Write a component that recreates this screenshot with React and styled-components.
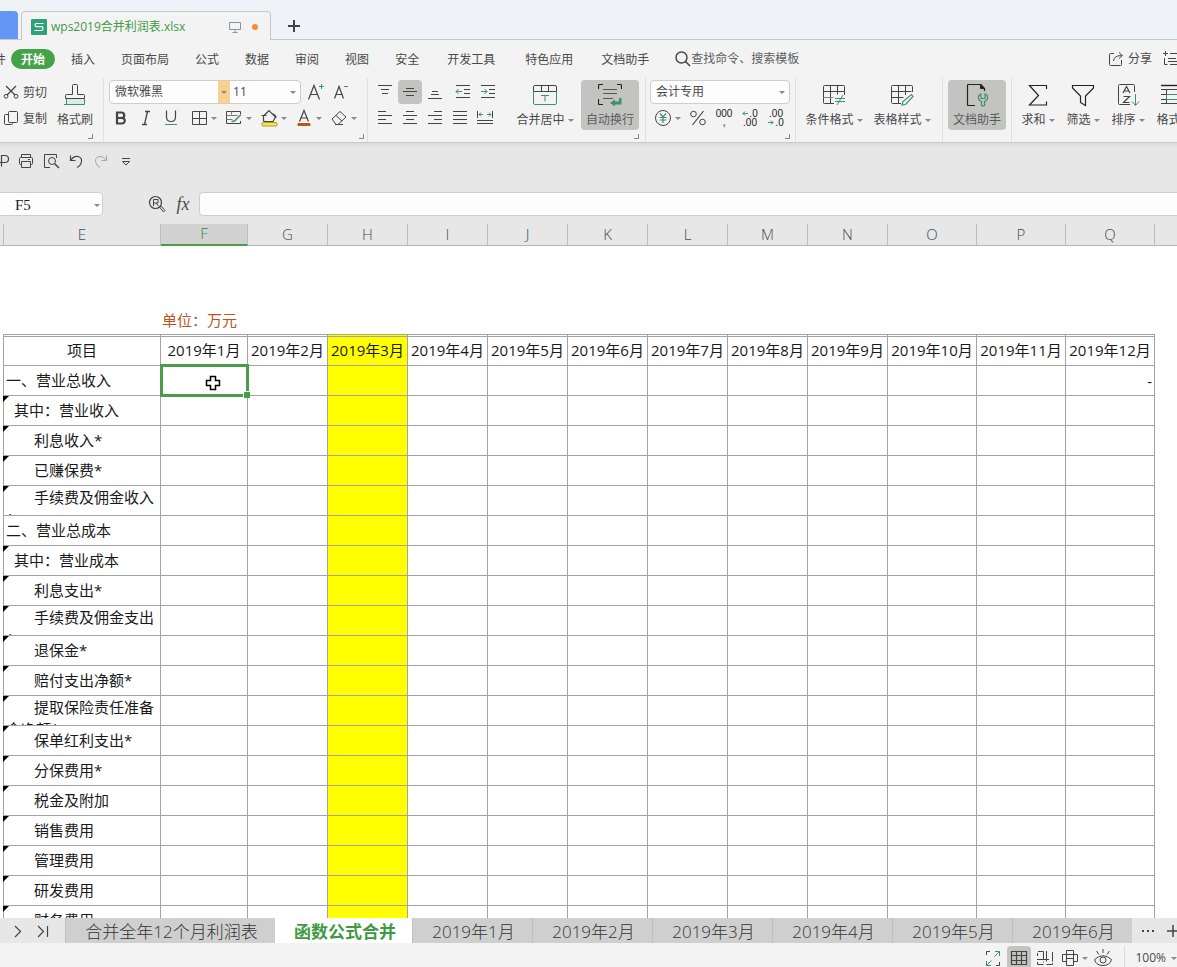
import styled, { createGlobalStyle, css } from "styled-components";

const menus = [
	{ name: "插入" },
	{ name: "页面布局" },
	{ name: "公式" },
	{ name: "数据" },
	{ name: "审阅" },
	{ name: "视图" },
	{ name: "安全" },
	{ name: "开发工具", wide: true },
	{ name: "特色应用", wide: true },
	{ name: "文档助手" },
];

const columns = [
	{ letter: "E", width: 157, title: "项目" },
	{ letter: "F", width: 87, title: "2019年1月" },
	{ letter: "G", width: 80, title: "2019年2月" },
	{ letter: "H", width: 80, title: "2019年3月" },
	{ letter: "I", width: 80, title: "2019年4月" },
	{ letter: "J", width: 80, title: "2019年5月" },
	{ letter: "K", width: 80, title: "2019年6月" },
	{ letter: "L", width: 80, title: "2019年7月" },
	{ letter: "M", width: 80, title: "2019年8月" },
	{ letter: "N", width: 80, title: "2019年9月" },
	{ letter: "O", width: 89, title: "2019年10月" },
	{ letter: "P", width: 89, title: "2019年11月" },
	{ letter: "Q", width: 89, title: "2019年12月" },
];

const rows = [
	{ label: "一、营业总收入", indent: 0, total: true },
	{ label: "其中：营业收入", indent: 8 },
	{ label: "利息收入*", indent: 28 },
	{ label: "已赚保费*", indent: 28 },
	{ label: "手续费及佣金收入*", indent: 28, wrap: true },
	{ label: "二、营业总成本", indent: 0 },
	{ label: "其中：营业成本", indent: 8 },
	{ label: "利息支出*", indent: 28 },
	{ label: "手续费及佣金支出*", indent: 28, wrap: true },
	{ label: "退保金*", indent: 28 },
	{ label: "赔付支出净额*", indent: 28 },
	{ label: "提取保险责任准备金净额*", indent: 28, wrap: true },
	{ label: "保单红利支出*", indent: 28 },
	{ label: "分保费用*", indent: 28 },
	{ label: "税金及附加", indent: 28 },
	{ label: "销售费用", indent: 28 },
	{ label: "管理费用", indent: 28 },
	{ label: "研发费用", indent: 28 },
	{ label: "财务费用", indent: 28 },
];

const sheets = [
	{ name: "合并全年12个月利润表", width: 210 },
	{ name: "函数公式合并", width: 137, active: true },
	{ name: "2019年1月", width: 120 },
	{ name: "2019年2月", width: 120 },
	{ name: "2019年3月", width: 120 },
	{ name: "2019年4月", width: 120 },
	{ name: "2019年5月", width: 120 },
	{ name: "2019年6月", width: 120 },
];

const green = "#3f8f72";

function Icon({ size = 18, children }) {
	return (
		<StyledSvg width={size} height={size} viewBox={`0 0 ${size} ${size}`} aria-hidden='true'>
			{children}
		</StyledSvg>
	);
}

function TitleBar() {
	return (
		<StyledTitleBar>
			<HomeTab aria-label='首页' />
			<FileTab>
				<svg width='16' height='16' viewBox='0 0 16 16' aria-hidden='true'>
					<rect width='16' height='16' rx='1' fill='#2fa27c' />
					<path d='M12.5 4.5H5.5Q4 4.5 4 6T5.5 7.7H10.5Q12 7.7 12 9.5T10.5 11.5H3.5' fill='none' stroke='#fff' strokeWidth='1.2' />
				</svg>
				<FileName>wps2019合并利润表.xlsx</FileName>
				<svg width='12' height='12' viewBox='0 0 12 12' fill='none' stroke='#8d9499' aria-hidden='true'>
					<path d='M.5 1.5h11v7H.5zM6 9v2M3.5 11.5h5' />
				</svg>
				<UnsavedDot />
			</FileTab>
			<NewTab aria-label='新建'>
				<Icon size={14}>
					<path d='M7 1v12M1 7h12' strokeWidth='2' />
				</Icon>
			</NewTab>
		</StyledTitleBar>
	);
}

function MenuBar() {
	return (
		<StyledMenuBar>
			<FileMenu>文件</FileMenu>
			<StartMenu>开始</StartMenu>
			{menus.map((menu) => (
				<MenuItem key={menu.name} $wide={menu.wide}>
					{menu.name}
				</MenuItem>
			))}
			<Search>
				<Icon size={16}>
					<circle cx='6.5' cy='6.5' r='5.5' strokeWidth='1.4' />
					<path d='M10.5 10.5L15 15' strokeWidth='1.6' />
				</Icon>
				<input aria-label='查找' placeholder='查找命令、搜索模板' />
			</Search>
			<ShareButton>
				<Icon size={16}>
					<path d='M6 2.5H2.5Q1.5 2.5 1.5 3.5v10q0 1 1 1h10q1 0 1-1V9M5.5 10Q6 4.5 13.5 4.5M11 1.5l3.5 3L11 7.5' />
				</Icon>
				分享
			</ShareButton>
			<NoteButton aria-label='批注'>
				<Icon>
					<path d='M3.5 1v5M1 3.5h5M8 3.5h9M2.5 8v6.5h3M6 8.5h8M6 11.5h11M8 14.5h9' />
				</Icon>
			</NoteButton>
		</StyledMenuBar>
	);
}

function BigButton({ label, icon, caret, active, narrow }) {
	return (
		<StyledBigButton $active={active} $narrow={narrow}>
			<Icon size={24}>{icon}</Icon>
			<span>
				{label}
				{caret && <Caret />}
			</span>
		</StyledBigButton>
	);
}

function DigitArrow({ d }) {
	return (
		<svg width='7' height='7' viewBox='0 0 7 7' fill='none' stroke={green} aria-hidden='true'>
			<path d={d} />
		</svg>
	);
}

function Ribbon() {
	return (
		<StyledRibbon>
			<Group $left={3} $right={10}>
				<GroupBody>
					<Lines>
						<TextButton>
							<Icon size={16}>
								<path d='M3 2l9 9M13 2L4 11' strokeWidth='1.3' />
								<circle cx='3' cy='12.3' r='1.9' />
								<circle cx='13' cy='12.3' r='1.9' />
							</Icon>
							<span>剪切</span>
						</TextButton>
						<TextButton>
							<Icon size={16}>
								<rect x='5.5' y='1.5' width='9' height='11' rx='1' />
								<path d='M5.5 4.5h-3q-1 0-1 1v8q0 1 1 1h6q1 0 1-1v-1' />
							</Icon>
							<span>复制</span>
						</TextButton>
					</Lines>
					<BrushButton>
						<Icon size={24}>
							<path d='M4 16h17v5.5H4z' fill='#dcebe7' stroke='none' />
							<path d='M9.5 11.5V2.5q0-1 1-1h3q1 0 1 1v9h6q1 0 1 1v3h-19v-3q0-1 1-1z' />
							<path d='M3.5 16v5.5h18V16M1 21.5h20' stroke={green} />
						</Icon>
						<span>格式刷</span>
					</BrushButton>
				</GroupBody>
				<Launcher aria-label='剪贴板设置' />
			</Group>

			<Group $left={5} $right={3}>
				<GroupBody>
					<Lines>
						<Line>
							<FontBox>
								<SelectBox $size={108}>
									<select aria-label='字体' defaultValue='微软雅黑'>
										<option>微软雅黑</option>
									</select>
								</SelectBox>
								<FontArrow>
									<Caret />
								</FontArrow>
								<SelectBox $size={70} $left={3}>
									<select aria-label='字号' defaultValue='11'>
										<option>11</option>
									</select>
									<Caret />
								</SelectBox>
							</FontBox>
							<ToolButton aria-label='增大字号' $gap={2}>
								<Icon>
									<path d='M1.5 16.5L7 2.5l5.5 14M3.5 11.5h7' strokeWidth='1.2' />
									<path d='M14.5 1v5M12 3.5h5' stroke={green} />
								</Icon>
							</ToolButton>
							<ToolButton aria-label='减小字号'>
								<Icon>
									<path d='M2.5 15.5L7 3.5l4.5 12M4 11.5h6' strokeWidth='1.2' />
									<path d='M12 3.5h4' stroke={green} />
								</Icon>
							</ToolButton>
						</Line>
						<Line>
							<ToolButton aria-label='加粗'>
								<Icon>
									<path d='M5 3.5h4.5a2.6 2.6 0 0 1 0 5.5H5zM5 9h5a2.7 2.7 0 0 1 0 5.5H5z' strokeWidth='2.2' />
								</Icon>
							</ToolButton>
							<ToolButton aria-label='倾斜'>
								<Icon>
									<path d='M8 2.5h5M5 15.5h5M10.5 2.5l-3 13' strokeWidth='1.3' />
								</Icon>
							</ToolButton>
							<ToolButton aria-label='下划线'>
								<Icon>
									<path d='M4.5 1.5v6.5q0 4.5 4.5 4.5t4.5-4.5V1.5' strokeWidth='1.2' />
									<path d='M3 15.5h12' stroke={green} />
								</Icon>
							</ToolButton>
							<SplitButton aria-label='边框' $gap={6}>
								<Icon>
									<path d='M2.5 2.5h14v13h-14zM9.5 2.5v13M2.5 9.5h14' />
								</Icon>
								<Caret />
							</SplitButton>
							<SplitButton aria-label='绘图边框'>
								<Icon>
									<path d='M15.5 5V2.5h-14v12h14V12' />
									<path d='M1.5 6.5h11M1.5 10.5h6M6.5 2.5v3' stroke='#777' />
									<path d='M16 5.5L9.5 12l-3 .5' stroke={green} strokeWidth='1.5' />
								</Icon>
								<Caret />
							</SplitButton>
							<SplitButton aria-label='填充颜色'>
								<Icon>
									<path d='M1.5 6.5h5M3.5 7v5q2 1 5 .5h4.500L15.5 8 9 1.5 4 6.5M12 4.5q3 1 4.500 4' strokeWidth='1.2' />
									<rect x='2' y='13.5' width='15' height='3.5' rx='1' fill='#ffe640' stroke='#a59a4a' />
								</Icon>
								<Caret />
							</SplitButton>
							<SplitButton aria-label='字体颜色'>
								<Icon>
									<path d='M4.5 12.5L9 1.5l4.500 11M6 9h6' strokeWidth='1.2' />
									<rect x='2.5' y='14' width='13' height='3' rx='1' fill='#b8561e' stroke='none' />
								</Icon>
								<Caret />
							</SplitButton>
							<SplitButton aria-label='清除'>
								<Icon>
									<path d='M2 10l8-7.500 6 5.500-8 7.500H6zM6 6.500l6 5.500M5 15.500h8' />
								</Icon>
								<Caret />
							</SplitButton>
						</Line>
					</Lines>
				</GroupBody>
				<Launcher aria-label='字体设置' />
			</Group>

			<Group $left={5} $right={6}>
				<GroupBody>
					<Lines>
						<Line>
							<ToolButton aria-label='顶端对齐'>
								<Icon>
									<path d='M2 2.5h14M5 6.5h8M6 10.5h6' />
								</Icon>
							</ToolButton>
							<ToolButton aria-label='垂直居中' $active>
								<Icon>
									<path d='M5 5.5h8M2 8.5h14M5 12.5h8' />
								</Icon>
							</ToolButton>
							<ToolButton aria-label='底端对齐'>
								<Icon>
									<path d='M6 8.5h6M5 11.5h8M2 15.5h14' />
								</Icon>
							</ToolButton>
							<ToolButton aria-label='减少缩进' $gap={3}>
								<Icon>
									<path d='M2 2.5h14M10 6.5h6M10 10.5h6M2 14.5h14' />
									<path d='M2 8.5h6M4.5 6L2 8.5 4.5 11' stroke={green} />
								</Icon>
							</ToolButton>
							<ToolButton aria-label='增加缩进'>
								<Icon>
									<path d='M2 2.5h14M10 6.5h6M10 10.5h6M2 14.5h14' />
									<path d='M2 8.5h6M5.5 6L8 8.5 5.5 11' stroke={green} />
								</Icon>
							</ToolButton>
						</Line>
						<Line>
							<ToolButton aria-label='左对齐'>
								<Icon>
									<path d='M2 2.5h8M2 6.5h14M2 10.5h8M2 14.5h14' />
								</Icon>
							</ToolButton>
							<ToolButton aria-label='水平居中'>
								<Icon>
									<path d='M5 2.5h8M2 6.5h14M5 10.5h8M2 14.5h14' />
								</Icon>
							</ToolButton>
							<ToolButton aria-label='右对齐'>
								<Icon>
									<path d='M8 2.5h8M2 6.5h14M8 10.5h8M2 14.5h14' />
								</Icon>
							</ToolButton>
							<ToolButton aria-label='两端对齐'>
								<Icon>
									<path d='M2 2.5h14M2 6.5h14M2 10.5h14M2 14.5h14' />
								</Icon>
							</ToolButton>
							<ToolButton aria-label='分散对齐'>
								<Icon>
									<path d='M1.5 2v7M16.5 2v7M1 11.5h16M1 14.5h16' />
									<path d='M3 5.5h4M5 3.5l-2 2 2 2M11 5.5h4M13 3.5l2 2-2 2' stroke={green} />
								</Icon>
							</ToolButton>
						</Line>
					</Lines>
					<Spacer $size={12} />
					<BigButton
						label='合并居中'
						caret
						icon={
							<>
								<path d='M.5 8.5V4q0-1.500 1.500-1.500h20q1.500 0 1.500 1.500v4.500zM8.5 3v5M15.5 3v5' />
								<path d='M.5 9v11q0 1.500 1.500 1.500h20q1.500 0 1.500-1.500V9M8 12.500h8M12 12.500v6' stroke={green} />
							</>
						}
					/>
					<Spacer $size={3} />
					<BigButton
						label='自动换行'
						active
						icon={
							<>
								<path d='M.5 6V2.500q0-1 1-1H5M19 1.500h3.500q1 0 1 1V6M.5 16v4.500q0 1 1 1H5' stroke='#222' strokeWidth='1.2' />
								<path d='M5 6.500h14M5 10.500h14M5 15.500h10' stroke='#555' />
								<path d='M21 15h2.500v6.500H17V23.500l-5-3.500 5-3.500v2h4z' stroke='none' fill={green} />
							</>
						}
					/>
				</GroupBody>
				<Launcher aria-label='对齐设置' />
			</Group>

			<Group $left={4} $right={5}>
				<GroupBody>
					<Lines>
						<Line>
							<FormatBox>
								<SelectBox $size={138}>
									<select aria-label='数字格式' defaultValue='会计专用'>
										<option>会计专用</option>
									</select>
									<Caret />
								</SelectBox>
							</FormatBox>
						</Line>
						<NumberLine>
							<SplitButton aria-label='货币'>
								<Icon>
									<circle cx='9' cy='9' r='7.5' />
									<path d='M6 4.5L9 8l3-3.5M9 8v6M5.5 8.5h7M5.5 11h7' stroke={green} strokeWidth='1.2' />
								</Icon>
								<Caret />
							</SplitButton>
							<ToolButton aria-label='百分比'>
								<Icon>
									<circle cx='4.5' cy='5' r='2.8' />
									<circle cx='13.5' cy='13' r='2.8' />
									<path d='M14.5 2L3.5 16' strokeWidth='1.2' />
								</Icon>
							</ToolButton>
							<DigitButton>
								<span>000</span>
								<i>,</i>
							</DigitButton>
							<DigitButton>
								<span>
									<DigitArrow d='M1 3.5h5M3 1.5l-2 2 2 2' />
									.0
								</span>
								<span>.00</span>
							</DigitButton>
							<DigitButton>
								<span>.00</span>
								<span>
									<DigitArrow d='M0 3.5h5M3 1.5l2 2-2 2' />
									.0
								</span>
							</DigitButton>
						</NumberLine>
					</Lines>
				</GroupBody>
				<Launcher aria-label='数字设置' />
			</Group>

			<Group $left={5} $right={7}>
				<GroupBody $gap={2}>
					<BigButton
						label='条件格式'
						caret
						icon={
							<>
								<path d='M12 20.5H2.5q-1 0-1-1v-16q0-1 1-1h19q1 0 1 1V12M1.5 8.5h21M8.5 2.5v18M15.5 2.5v9' />
								<path d='M1.5 14.5h10' stroke='#888' />
								<path d='M13 15.5h10M13 18.5h10M21 12l-6 10' stroke={green} />
							</>
						}
					/>
					<BigButton
						label='表格样式'
						caret
						icon={
							<>
								<path d='M11 20.5H2.5q-1 0-1-1v-16q0-1 1-1h19q1 0 1 1V9M1.5 8.5h20M1.5 14.5h12M8.5 2.5v18M15.5 2.5V12' />
								<path d='M21.5 11.5l1.500 2-7.500 8-3.500.5 1-3.500z' stroke={green} strokeWidth='1.2' />
							</>
						}
					/>
				</GroupBody>
			</Group>

			<Group $left={5} $right={5}>
				<GroupBody>
					<BigButton
						label='文档助手'
						active
						icon={
							<>
								<path d='M10 22.5H3.5q-1 0-1-1v-19q0-1 1-1H16l3.500 4V8' stroke='#222' strokeWidth='1.2' />
								<path d='M15.5 1.5V5.5h4z' fill='#222' stroke='#222' />
								<path d='M16 11q-3 1-2.500 4t3 3.500v4q1.500 1 3 0v-4q2.500-.5 3-3.500T20 11v4.500h-4z' stroke={green} strokeWidth='1.2' />
							</>
						}
					/>
				</GroupBody>
			</Group>

			<Group $left={5} $right={0}>
				<GroupBody $gap={3}>
					<BigButton
						label='求和'
						caret
						narrow
						icon={<path d='M20.5 6V2.5H3.5l9 10-9 9.5h17V18.5' stroke='#222' strokeWidth='1.2' />}
					/>
					<BigButton
						label='筛选'
						caret
						narrow
						icon={<path d='M1.5 2.5h21v2.5L14.5 13v9.5l-5-3V13L1.5 5z' stroke='#222' strokeWidth='1.2' />}
					/>
					<BigButton
						label='排序'
						caret
						narrow
						icon={
							<>
								<path d='M14 21.5H3.5q-1 0-1-1v-18q0-1 1-1h14q1 0 1 1V9' />
								<path d='M7 10l3.5-6.5L14 10M8.5 8h4M7.500 13.500h6l-6 6h6' strokeWidth='1.2' />
								<path d='M19.5 11v11M16 18.5l3.5 4 3.5-4' stroke={green} />
							</>
						}
					/>
					<BigButton
						label='格式'
						caret
						narrow
						icon={
							<>
								<path d='M-2 2.5h26' stroke='#222' strokeWidth='1.4' />
								<path d='M-.5 6.5h24v14H-.5zM0 11.5h23M0 16.5h23M5.5 6.5v14M16.5 6.5v14' />
								<path d='M5.5 11.5h11v5h-11z' stroke={green} />
							</>
						}
					/>
				</GroupBody>
			</Group>
		</StyledRibbon>
	);
}

function QuickBar() {
	return (
		<StyledQuickBar>
			<ToolButton aria-label='输出为PDF'>
				<Icon>
					<path d='M9.5 14.5V3.5h3.5a3.5 3.5 0 0 1 0 7H4' strokeWidth='1.2' />
				</Icon>
			</ToolButton>
			<ToolButton aria-label='打印'>
				<Icon>
					<path d='M4.5 5.5v-3h9v3M4.5 12.5h-1q-1 0-1-1v-5q0-1 1-1h11q1 0 1 1v5q0 1-1 1h-1M4.5 9.5h9v6h-9zM11 7.5h2' />
				</Icon>
			</ToolButton>
			<ToolButton aria-label='打印预览'>
				<Icon>
					<path d='M8 15.5H2.5v-13h12V6' />
					<circle cx='10' cy='9' r='3.5' />
					<path d='M12.5 11.5L17 16' strokeWidth='1.5' />
				</Icon>
			</ToolButton>
			<ToolButton aria-label='撤销'>
				<Icon>
					<path d='M3.5 3.5v5h5M3.5 8.5Q7 3.5 11 4.5t3.5 5-4.5 6' strokeWidth='1.2' />
				</Icon>
			</ToolButton>
			<ToolButton aria-label='恢复' $faded>
				<Icon>
					<path d='M14.5 3.5v5h-5M14.5 8.5Q11 3.5 7 4.5t-3.5 5 4.5 6' />
				</Icon>
			</ToolButton>
			<ToolButton aria-label='自定义'>
				<Icon>
					<path d='M5 6.5h8M5.5 9.5h7L9 13z' />
				</Icon>
			</ToolButton>
		</StyledQuickBar>
	);
}

function FormulaBar() {
	return (
		<StyledFormulaBar>
			<NameBox>
				<input aria-label='名称框' defaultValue='F5' />
				<Caret />
			</NameBox>
			<ToolButton aria-label='浏览公式'>
				<Icon>
					<circle cx='7.5' cy='7.5' r='6' strokeWidth='1.2' />
					<path d='M5.5 11V4.5h4.5v3.5H5.5M8 8l2.5 3' />
					<path d='M11.5 12l1.500-1 4 4.500-1.500 1.500z' />
				</Icon>
			</ToolButton>
			<FxButton>fx</FxButton>
			<FormulaInput aria-label='编辑栏' />
		</StyledFormulaBar>
	);
}

function Sheet() {
	return (
		<StyledSheet>
			<table>
				<colgroup>
					<Col $width={4} />
					{columns.map((column) => (
						<Col key={column.letter} $width={column.width} />
					))}
					<col />
				</colgroup>
				<thead>
					<tr>
						<Letter />
						{columns.map((column) => (
							<Letter key={column.letter} scope='col' $active={column.letter === "F"}>
								{column.letter}
							</Letter>
						))}
						<Letter $last />
					</tr>
				</thead>
				<tbody>
					<BlankRow>
						<td colSpan={15} />
					</BlankRow>
					<UnitRow>
						<td colSpan={2} />
						<td colSpan={13}>单位：万元</td>
					</UnitRow>
					<tr>
						<Cell />
						{columns.map((column) => (
							<TitleCell key={column.letter} $yellow={column.letter === "H"}>
								{column.title}
							</TitleCell>
						))}
						<td />
					</tr>
					{rows.map((row) => (
						<tr key={row.label}>
							<Cell />
							<LabelCell $marked={row.indent > 0}>
								<Label $indent={row.indent} $wrap={row.wrap}>
									{row.label}
								</Label>
							</LabelCell>
							{columns.slice(1).map((column) => (
								<Cell key={column.letter} $yellow={column.letter === "H"}>
									{row.total && column.letter === "F" && (
										<Selection>
											<svg width='16' height='16' viewBox='0 0 16 16' aria-hidden='true'>
												<path d='M5.5 1.5h5v4h4v5h-4v4h-5v-4h-4v-5h4z' fill='#fff' stroke='#000' strokeWidth='1.5' />
											</svg>
										</Selection>
									)}
									{row.total && column.letter === "Q" && "-"}
								</Cell>
							))}
							<td />
						</tr>
					))}
				</tbody>
			</table>
		</StyledSheet>
	);
}

function SheetTabs() {
	return (
		<StyledSheetTabs>
			<TabArrows>
				<ToolButton aria-label='下一个'>
					<Icon>
						<path d='M6 4l5.5 5.5L6 15' strokeWidth='1.2' />
					</Icon>
				</ToolButton>
				<ToolButton aria-label='最后一个'>
					<Icon>
						<path d='M4 4l5.5 5.5L4 15M13.5 4v11' strokeWidth='1.2' />
					</Icon>
				</ToolButton>
			</TabArrows>
			{sheets.map((sheet) => (
				<SheetTab key={sheet.name} $width={sheet.width} $active={sheet.active}>
					{sheet.name}
				</SheetTab>
			))}
			<MoreTabs>
				<ToolButton aria-label='更多工作表'>
					<Icon>
						<path d='M3 9h2M8 9h2M13 9h2' strokeWidth='2' />
					</Icon>
				</ToolButton>
				<ToolButton aria-label='新建工作表'>
					<Icon>
						<path d='M9 3v12M3 9h12' strokeWidth='1.5' />
					</Icon>
				</ToolButton>
			</MoreTabs>
		</StyledSheetTabs>
	);
}

function StatusBar() {
	return (
		<StyledStatusBar>
			<ToolButton aria-label='全屏显示'>
				<Icon>
					<path d='M6 2.5H2.5V6M12 16.5h3.5V13' />
					<path d='M11 2.5h4.5V7M15.5 2.5l-5 5M2.5 12v4.5H7M2.5 16.5l5-5' stroke={green} />
				</Icon>
			</ToolButton>
			<ToolButton aria-label='普通视图' $active $gap={2}>
				<Icon>
					<path d='M1.5 2.5h15v13h-15zM1.5 6.5h15M1.5 11.5h15M6.5 2.5v13M11.5 2.5v13' strokeWidth='1.2' />
				</Icon>
			</ToolButton>
			<ToolButton aria-label='分页预览' $gap={2}>
				<Icon>
					<path d='M2 2.5h5.5v8M1.5 4v3M1 10.500h12M10.500 2v10.500M16.500 3v9.500M1.500 13v2.500h6M7.500 12.500v1M10.500 15.500h6v-1.500' />
				</Icon>
			</ToolButton>
			<ViewButton aria-label='页面布局' $gap={4}>
				<Icon>
					<path d='M5.500 12.500h-4v-7h15v7h-4M5.500 1.500h7v15h-7zM5.500 9.500h7' />
				</Icon>
				<Caret />
			</ViewButton>
			<ToolButton aria-label='护眼模式'>
				<Icon size={20}>
					<path d='M1.5 11.5Q10 4 18.5 11.5 17 17.5 10 17.5T1.5 11.5zM10 1v4M3.500 3l2.500 3.500M16.500 3L14 6.500' />
					<circle cx='10' cy='12' r='3' />
				</Icon>
			</ToolButton>
			<Zoom>
				100%
				<Caret />
			</Zoom>
		</StyledStatusBar>
	);
}

export default function App() {
	return (
		<>
			<GlobalStyle />
			<Page>
				<TitleBar />
				<MenuBar />
				<Ribbon />
				<QuickBar />
				<FormulaBar />
				<Sheet />
				<SheetTabs />
				<StatusBar />
			</Page>
		</>
	);
}

const GlobalStyle = createGlobalStyle`
	* {
		box-sizing: border-box;
	}

	body {
		margin: 0;
		background: #e7e7e7;
		color: #4a4a4a;
		font: 12px/18px "Open Sans", "Noto Sans CJK SC", sans-serif;
	}

	button {
		display: flex;
		align-items: center;
		flex-shrink: 0;
		padding: 0;
		border: none;
		background: none;
		color: inherit;
		font: inherit;
		white-space: nowrap;
	}

	input,
	select {
		min-width: 0;
		padding: 0;
		border: none;
		outline: none;
		background: none;
		color: inherit;
		font: inherit;
		appearance: none;
	}
`;

const Page = styled.div`
	height: 100vh;
	display: flex;
	flex-direction: column;
	overflow: hidden;
`;

const StyledSvg = styled.svg`
	flex-shrink: 0;
	fill: none;
	stroke: #444;
`;

const Caret = styled.i`
	display: inline-block;
	flex-shrink: 0;
	margin: 0 0 0 3px;
	border: 3px solid transparent;
	border-top-color: #888;
	border-bottom: none;
	vertical-align: middle;
`;

const Spacer = styled.div`
	flex: 0 0 ${({ $size }) => $size}px;
`;

const StyledTitleBar = styled.div`
	height: 40px;
	flex-shrink: 0;
	display: flex;
	align-items: flex-end;
	background: #eff2f7;
	box-shadow: inset 0 -1px #c4cacb;
`;

const HomeTab = styled.button`
	width: 18px;
	height: 28px;
	margin-bottom: 1px;
	background: #6397f5;
	border-radius: 0 4px 0 0;
`;

const FileTab = styled.div`
	width: 250px;
	height: 29px;
	margin-left: 3px;
	padding: 2px 12px 0 9px;
	display: flex;
	align-items: center;
	background: #f3f3f3;
	border: 1px solid #c4cacb;
	border-bottom: none;
	border-radius: 4px 4px 0 0;
`;

const FileName = styled.span`
	flex: 1;
	margin-left: 4px;
	color: #3f9a42;
`;

const UnsavedDot = styled.span`
	width: 6px;
	height: 6px;
	margin-left: 11px;
	background: #f5893c;
	border-radius: 50%;
`;

const NewTab = styled.button`
	height: 28px;
	margin-left: 16px;
`;

const StyledMenuBar = styled.nav`
	height: 38px;
	flex-shrink: 0;
	display: flex;
	align-items: center;
	background: #f3f3f3;
`;

const FileMenu = styled.button`
	margin-left: -18px;
	padding-top: 2px;
`;

const StartMenu = styled.button`
	height: 20px;
	margin: 0 3px 0 5px;
	padding: 2px 10px 0;
	background: #45a249;
	border-radius: 10px;
	color: #fff;
	font-weight: 700;
`;

const MenuItem = styled.button`
	padding: 2px ${({ $wide }) => ($wide ? 15 : 13)}px 0;
`;

const Search = styled.label`
	flex: 1;
	min-width: 140px;
	margin-left: 13px;
	display: flex;
	align-items: center;

	& input {
		flex: 1;
	}

	& input::placeholder {
		color: #5b625f;
		opacity: 1;
	}
`;

const ShareButton = styled.button`
	gap: 4px;
`;

const NoteButton = styled.button`
	margin: 0 -3px 0 10px;
`;

const StyledRibbon = styled.div`
	flex-shrink: 0;
	display: flex;
	overflow: hidden;
	background: #f3f3f3;
	border-bottom: 1px solid #cacaca;
`;

const Group = styled.div`
	flex-shrink: 0;
	height: 64px;
	padding: 2px ${({ $right }) => $right}px 0 ${({ $left }) => $left}px;
	border-right: 1px solid #e0e0e0;
`;

const GroupBody = styled.div`
	height: 50px;
	display: flex;
	gap: ${({ $gap = 0 }) => $gap}px;
`;

const Launcher = styled.button`
	width: 5px;
	height: 5px;
	margin: 4px 0 0 auto;
	border-right: 1px solid #888;
	border-bottom: 1px solid #888;
`;

const Lines = styled.div`
	display: flex;
	flex-direction: column;
	gap: 2px;
`;

const Line = styled.div`
	height: 24px;
	display: flex;
	align-items: center;
	gap: 1px;
`;

const NumberLine = styled(Line)`
	padding-left: 4px;
	gap: 2px;

	& > :first-child {
		width: 30px;
	}
`;

const TextButton = styled.button`
	height: 24px;
	gap: 4px;

	& span {
		padding-top: 2px;
	}
`;

const ToolButton = styled.button`
	width: 24px;
	height: 24px;
	justify-content: center;
	margin-left: ${({ $gap = 0 }) => $gap}px;
	background: ${({ $active }) => ($active ? "#c3c3c1" : "none")};
	border-radius: 4px;
	opacity: ${({ $faded }) => ($faded ? 0.4 : 1)};
`;

const SplitButton = styled.button`
	width: 34px;
	height: 24px;
	margin-left: ${({ $gap = 0 }) => $gap}px;
`;

const ViewButton = styled(SplitButton)`
	width: 30px;
`;

const DigitButton = styled.button`
	width: 24px;
	flex-direction: column;
	color: #222;
	font-family: "Liberation Sans", sans-serif;
	font-size: 10px;
	line-height: 9px;

	& i {
		color: ${green};
		font-style: normal;
		font-weight: 700;
	}
`;

const bigButton = css`
	height: 50px;
	padding-top: 3px;
	flex-direction: column;
	gap: 4px;
`;

const StyledBigButton = styled.button`
	${bigButton}
	width: ${({ $active, $narrow }) => ($active ? 58 : $narrow ? 42 : 66)}px;
	background: ${({ $active }) => ($active ? "#c3c3c1" : "none")};
	border-radius: 4px;
	color: ${({ $active }) => ($active ? "#5c5c5c" : "inherit")};
`;

const BrushButton = styled.button`
	${bigButton}
	margin-left: 10px;
`;

const boxed = css`
	height: 24px;
	display: flex;
	background: #fdfdfd;
	border: 1px solid #cdcdcd;
	border-radius: 4px;
`;

const FontBox = styled.div`
	${boxed}
	width: 192px;
`;

const FormatBox = styled.div`
	${boxed}
	width: 140px;
`;

const SelectBox = styled.div`
	width: ${({ $size }) => $size}px;
	padding: 0 4px 0 ${({ $left = 5 }) => $left}px;
	display: flex;
	align-items: center;

	& select {
		flex: 1;
	}
`;

const FontArrow = styled.span`
	width: 12px;
	display: flex;
	align-items: center;
	background: #fbd08e;
`;

const StyledQuickBar = styled.div`
	height: 36px;
	flex-shrink: 0;
	margin-left: -11px;
	display: flex;
	align-items: center;
	gap: 1px;
	background: linear-gradient(#dadada, #e7e7e7 5px);
`;

const StyledFormulaBar = styled.div`
	flex-shrink: 0;
	padding: 13px 0 8px;
	display: flex;
	gap: 2px;
`;

const NameBox = styled.div`
	${boxed}
	width: 107px;
	margin: 0 40px 0 -4px;
	padding: 2px 2px 0 18px;
	align-items: center;

	& input {
		flex: 1;
		color: #222;
		font-family: "Liberation Serif", serif;
		font-size: 15px;
	}
`;

const FxButton = styled.button`
	width: 24px;
	height: 24px;
	justify-content: center;
	font-family: "Liberation Serif", serif;
	font-size: 18px;
	font-style: italic;
`;

const FormulaInput = styled.input`
	&& {
		${boxed}
		flex: 1;
		margin: 0 -4px 0 2px;
		padding: 0 8px;
	}
`;

const StyledSheet = styled.main`
	flex: 1;
	min-height: 0;
	overflow: hidden;
	background: #fff;
	color: #1a1a1a;
	font-size: 15px;

	& table {
		width: 100%;
		table-layout: fixed;
		border-spacing: 0;
	}

	& td {
		padding: 0;
		white-space: nowrap;
	}
`;

const Col = styled.col`
	width: ${({ $width }) => $width}px;
`;

const Letter = styled.th`
	height: 22px;
	padding: 0 0 2px;
	background: ${({ $active }) => ($active ? "#d2d2d2" : "#e7e7e7")};
	border-right: ${({ $last }) => ($last ? "none" : "1px solid #bdbdbd")};
	border-bottom: ${({ $active }) => ($active ? "2px solid #4a9c48" : "1px solid #b5b5b5")};
	color: ${({ $active }) => ($active ? "#2f8a32" : "#434d58")};
	font-weight: 300;
	line-height: 18px;
`;

const BlankRow = styled.tr`
	height: 60px;
`;

const UnitRow = styled.tr`
	height: 28px;
	color: #b8561e;

	& td:last-child {
		padding-left: 1px;
	}
`;

const Cell = styled.td`
	position: relative;
	height: 30px;
	background: ${({ $yellow }) => ($yellow ? "#ff0" : "none")};
	border-right: 1px solid #a3a3a3;
	border-bottom: 1px solid #a3a3a3;
	text-align: right;

	&:first-child {
		border-bottom: none;
	}

	&& {
		padding-right: 2px;
	}
`;

const TitleCell = styled(Cell)`
	height: 32px;
	border-top: 3px double #a3a3a3;
	text-align: center;

	&& {
		padding: 0 0 2px;
	}
`;

const LabelCell = styled(Cell)`
	text-align: left;

	&& {
		padding: 0;
	}

	&::before {
		content: "";
		display: ${({ $marked }) => ($marked ? "block" : "none")};
		position: absolute;
		top: 0;
		left: -1px;
		border: 3px solid #000;
		border-right-color: transparent;
		border-bottom-color: transparent;
	}
`;

const Label = styled.div`
	height: 29px;
	padding-left: 2px;
	overflow: hidden;
	text-indent: ${({ $indent }) => $indent}px;
	line-height: ${({ $wrap }) => ($wrap ? 22 : 29)}px;
	white-space: ${({ $wrap }) => ($wrap ? "normal" : "nowrap")};
`;

const Selection = styled.div`
	position: absolute;
	inset: -2px -2px -2px -1px;
	z-index: 1;
	padding: 4px 0 0 16px;
	display: flex;
	align-items: center;
	justify-content: center;
	border: 3px solid #4a9c48;

	&::after {
		content: "";
		position: absolute;
		right: -4px;
		bottom: -4px;
		width: 6px;
		height: 6px;
		background: #4a9c48;
		border: 1px solid #fff;
		border-right: none;
		border-bottom: none;
	}
`;

const StyledSheetTabs = styled.div`
	height: 25px;
	flex-shrink: 0;
	display: flex;
	background: #e7e7e7;
`;

const TabArrows = styled.div`
	width: 65px;
	flex-shrink: 0;
	padding-left: 6px;
	display: flex;
	align-items: center;
	gap: 1px;
`;

const SheetTab = styled.button`
	min-width: ${({ $width }) => $width}px;
	padding: 2px 0 0 2px;
	justify-content: center;
	background: ${({ $active }) => ($active ? "#fff" : "#cfcfcf")};
	border-left: 1px solid ${({ $active }) => ($active ? "#fff" : "#bfbfbf")};
	color: ${({ $active }) => ($active ? "#3f9a42" : "#333")};
	font-size: 17px;
	font-weight: ${({ $active }) => ($active ? 700 : 300)};
`;

const MoreTabs = styled.div`
	margin-left: 4px;
	display: flex;
	align-items: center;
	gap: 1px;
`;

const StyledStatusBar = styled.footer`
	height: 24px;
	flex-shrink: 0;
	padding-top: 3px;
	display: flex;
	justify-content: flex-end;
	overflow: hidden;
	background: #f3f3f3;
`;

const Zoom = styled.button`
	height: 24px;
	margin-left: 9px;
	padding-left: 10px;
	gap: 2px;
	border-left: 1px solid #dcdcdc;
`;
